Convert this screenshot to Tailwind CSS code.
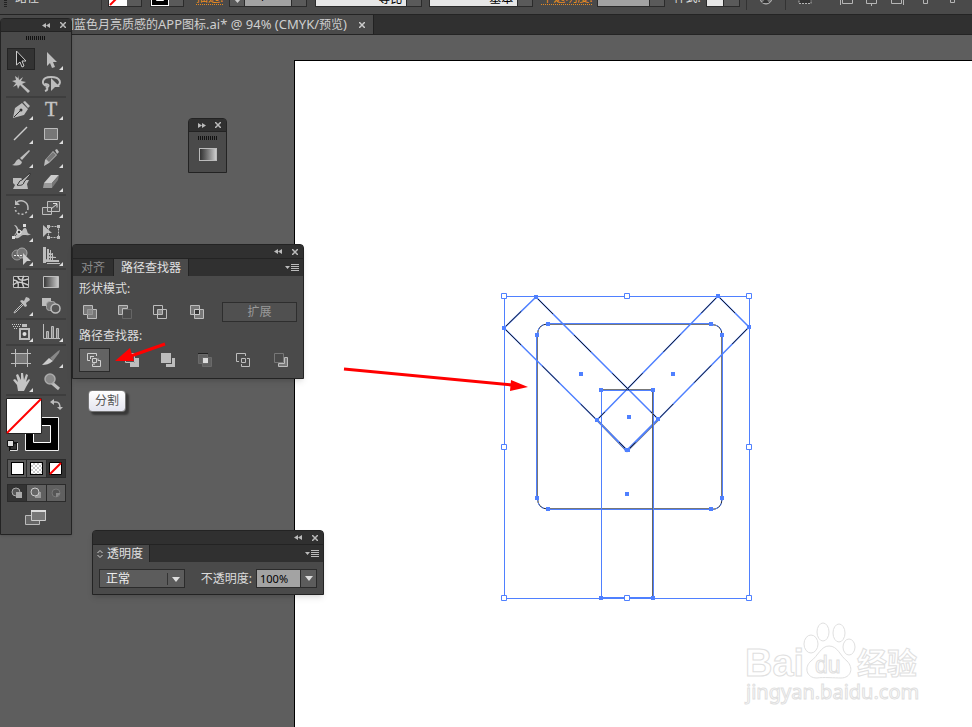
<!DOCTYPE html>
<html lang="zh-CN">
<head>
    <meta charset="UTF-8">
    <meta name="viewport" content="width=device-width, initial-scale=1.0">
    <title>蓝色月亮质感的APP图标.ai</title>
    <script src="https://cdn.jsdelivr.net/npm/@tailwindcss/browser@4"></script>
</head>
<body class="relative flex h-screen flex-col overflow-hidden bg-[#5e5e5e] font-['Noto_Sans','Noto_Sans_CJK_SC',sans-serif] text-xs text-[#dcdcdc]">

    <!-- control bar, scrolled half out of the window -->
    <header class="flex h-[14px] shrink-0 flex-col justify-end overflow-hidden bg-[#4a4a4a]">
        <div class="flex h-7 shrink-0 items-start whitespace-nowrap leading-6">
            <div class="ml-1 mr-2 h-[21px] w-[3px] bg-[repeating-linear-gradient(#222_0_1px,#4a4a4a_1px_2px)]"></div>
            <span class="w-[86px]">路径</span>
            <div class="mr-[6px] h-6 w-px bg-[#333]"></div>
            <button class="mr-2 flex h-[21px] w-[34px] border border-[#2b2b2b] bg-[#5a5a5a]" aria-label="填色">
                <svg class="h-[19px] w-[18px]" viewBox="0 0 18 19"><rect width="18" height="19" fill="#fff"/><path d="M1 18 17 2" stroke="#f00" stroke-width="2"/></svg>
            </button>
            <button class="mr-3 flex h-[21px] w-[34px] border border-[#2b2b2b] bg-[#5a5a5a]" aria-label="描边颜色">
                <svg class="h-[19px] w-[18px]" viewBox="0 0 18 19"><rect width="18" height="19" fill="#fff"/><path d="M1 1h16v17H1z"/><path d="M5.500 5.500h7v8h-7z" fill="#4a4a4a" stroke="#fff"/></svg>
            </button>
            <a href="#" class="mr-[6px] h-[19px] border-b border-dotted border-[#e88a20] text-[#e88a20]">描边:</a>
            <button class="flex h-[21px] w-4 items-end justify-center border border-[#2b2b2b] bg-[#5a5a5a]" aria-label="粗细微调">
                <svg class="mb-[3px] h-[6px] w-[7px]" viewBox="0 0 7 6"><path d="M0 0h7v2L3.500 6 0 2z" fill="#ccc"/></svg>
            </button>
            <input class="h-[21px] w-[46px] border-y border-[#2b2b2b] bg-[#a3a3a3] pr-3 text-center text-black" value="1" aria-label="描边粗细">
            <button class="mr-2 h-[21px] w-4 border border-[#2b2b2b] bg-[#5a5a5a]" aria-label="粗细菜单"></button>
            <button class="flex h-[21px] w-[107px] border border-[#2b2b2b] bg-[#5a5a5a] text-black"><span class="h-[19px] w-[91px] border-r border-[#2b2b2b] bg-[#e6e6e6] pr-1 text-right">等比</span></button>
            <button class="ml-[7px] mr-2 flex h-[21px] w-[104px] border border-[#2b2b2b] bg-[#5a5a5a] text-black"><span class="h-[19px] w-[88px] border-r border-[#2b2b2b] bg-[#e6e6e6] pr-1 text-right">基本</span></button>
            <a href="#" class="mr-[5px] h-[19px] border-b border-dotted border-[#e88a20] text-[#e88a20]">不透明度:</a>
            <button class="mr-2 flex h-[21px] w-[68px] border border-[#2b2b2b] bg-[#5a5a5a]" aria-label="不透明度"><span class="h-[19px] w-[52px] border-r border-[#2b2b2b] bg-[#a3a3a3]"></span></button>
            <span class="w-[33px]">样式:</span>
            <button class="mr-[6px] flex h-[21px] w-[34px] border border-[#2b2b2b] bg-[#5a5a5a]" aria-label="图形样式"><span class="h-[19px] w-[17px] border-r border-[#2b2b2b] bg-[#e6e6e6]"></span></button>
            <div class="h-6 w-px bg-[#333]"></div>
            <svg class="ml-3 h-[21px] w-[14px]" viewBox="0 0 14 21"><circle cx="7" cy="12" r="6" fill="#777" stroke="#bbb"/><path d="M7 12 3 17l7 0z" fill="#333"/></svg>
            <div class="ml-3 h-6 w-px bg-[#333]"></div>
            <svg class="ml-3 h-[21px] w-[170px]" viewBox="0 0 170 21" fill="none" stroke="#b5b5b5">
                <path d="M1 9.500h12v8H1z" fill="#333" stroke-dasharray="2 1"/>
                <path d="M42.500 5v14M44.500 9v8.500h10V9M68.500 9v8.500h10V9M73.500 17v3M93.500 9v8.500h10V9M105.500 5v14M125.500 9v8.500h4V9M152.500 9v7.500h4V9"/>
            </svg>
        </div>
    </header>

    <!-- document tabs -->
    <nav class="flex h-[21px] shrink-0 border-b border-t border-[#242424] bg-[#303030]">
        <div class="flex w-[374px] items-center border-r border-[#222] bg-[#4a4a4a] pl-[62px] text-[#cfcfcf]">
            <span class="flex-1 whitespace-nowrap">制蓝色月亮质感的<span class="text-[13px]">APP</span>图标<span class="text-[13px]">.ai* @ 94% (CMYK/</span>预览<span class="text-[13px]">)</span></span>
            <button class="mr-2" aria-label="关闭文档"><svg class="h-[6px] w-[6px]" viewBox="0 0 6 6"><path d="M0 0 6 6M6 0 0 6" stroke="#ccc" stroke-width="1.500"/></svg></button>
        </div>
    </nav>

    <!-- pasteboard and artboard -->
    <main class="flex min-h-0 flex-1 overflow-hidden pl-[294px] pt-[25px]">
        <div class="min-w-0 flex-1 overflow-hidden border-l border-t border-black bg-white">
            <svg class="h-[666px] w-[677px] max-w-none" viewBox="295 61 677 666" fill="none">
                <g stroke="#777" stroke-width="2">
                    <path d="M548 324h163M548 509h163M653 390v208M601 390h52M537 334v164M722 334v164"/>
                    <path d="m597 420 30 31 31-31"/>
                </g>
                <g stroke="#222" stroke-width="1">
                    <path d="M537.500 335q0-11 11-11M711 324.500q11 0 11 11M537.500 498q0 11 11 11M711 509.500q11 0 11-11"/>
                </g>
                <g stroke="#4f80ff" stroke-width="1">
                    <path d="M504.500 296.500h245v302h-245z"/>
                    <path d="M601.500 390.500h52v207h-52z"/>
                    <path d="M548 323.500h163M548 509.500h163M536.500 335v163M722.500 335v163M601 597.500h52"/>
                    <path stroke-width="1.500" d="m536 297 122 122-31 31-123-122zM718 296l31 31-122 124-30-31z"/>
                    <path stroke-dasharray="3 2" d="M537.500 335q0-11 11-11M711 324.500q11 0 11 11M537.500 498q0 11 11 11M711 509.500q11 0 11-11"/>
                </g>
                <!-- black path shows through the selection edge in places -->
                <path stroke="#222" stroke-dasharray="24 30" d="m536 297 122 122M504 328l123 122M718 296l31 31M718 296 597 420M749 327 627 451M504 328l32-31"/>
                <path stroke="#666" d="M652.500 391v206"/>
                <path fill="#4f80ff" d="M534 295h4v4h-4zM502 326h4v4h-4zM716 294h4v4h-4zM747 325h4v4h-4zM546 322h4v4h-4zM709 322h4v4h-4zM535 333h4v4h-4zM720 333h4v4h-4zM535 496h4v4h-4zM720 496h4v4h-4zM546 507h4v4h-4zM709 507h4v4h-4zM579 372h4v4h-4zM671 372h4v4h-4zM599 388h4v4h-4zM651 388h4v4h-4zM627 415h4v4h-4zM595 418h4v4h-4zM656 417h4v4h-4zM624 448h6v4h-5zM625 492h4v4h-4zM599 596h4v4h-4zM651 596h4v4h-4z"/>
                <path fill="#fff" stroke="#4f80ff" d="M501.500 293.500h5v5h-5zM624.500 293.500h5v5h-5zM746.500 293.500h5v5h-5zM501.500 444.500h5v5h-5zM746.500 444.500h5v5h-5zM501.500 595.500h5v5h-5zM624.500 595.500h5v5h-5zM746.500 595.500h5v5h-5z"/>

                <path d="m344 369 168 16" stroke="#f00" stroke-width="3"/>
                <path d="m511 380 17 7-18 4z" fill="#f00"/>

                <!-- watermark -->
                <g fill="#fff" stroke="#e0e0e0" stroke-width="1">
                    <text x="745" y="676" font-family="Liberation Sans, sans-serif" font-weight="700" font-size="38">Bai</text>
                    <ellipse cx="811" cy="644" rx="7" ry="9"/>
                    <ellipse cx="823" cy="632" rx="6" ry="9"/>
                    <ellipse cx="839" cy="633" rx="6" ry="9"/>
                    <ellipse cx="849" cy="647" rx="6" ry="8"/>
                    <path d="M829 646c9 0 11 10 18 15 7 7 4 17-6 17-6 0-18-1-24 0-11 0-13-11-6-17 7-5 10-15 18-15z"/>
                    <text x="815" y="673" font-family="Liberation Sans, sans-serif" font-size="23">du</text>
                    <text x="857" y="674" font-family="Noto Sans CJK SC, sans-serif" font-weight="700" font-size="30">经验</text>
                    <text x="746" y="699" font-family="Noto Sans, sans-serif" font-size="20">jingyan.baidu.com</text>
                </g>
            </svg>
        </div>
    </main>

    <!-- toolbox -->
    <aside class="absolute left-0 top-[18px] w-[72px] rounded-t border border-[#232323] bg-[#4a4a4a] shadow">
        <div class="flex h-[13px] items-center justify-end gap-[10px] border-b border-[#232323] bg-[#303030] pr-[5px]">
            <button aria-label="折叠"><svg class="h-[5px] w-2" viewBox="0 0 8 5"><path d="M4 0v5L0 2.500zM8 0v5L4 2.500z" fill="#bbb"/></svg></button>
            <button aria-label="关闭"><svg class="h-[6px] w-[6px]" viewBox="0 0 6 6"><path d="M0 0 6 6M6 0 0 6" stroke="#bbb" stroke-width="1.500"/></svg></button>
        </div>
        <div class="mx-auto mb-2 mt-1 h-1 w-5 bg-[repeating-linear-gradient(90deg,#111_0_1px,#4a4a4a_1px_2px)]"></div>

        <div class="px-[5px]">
            <div class="grid grid-cols-2 border-b-2 border-[#3e3e3e]">
                <button class="mx-auto flex h-[22px] w-7 items-center justify-center border border-[#242424] bg-[#333]" aria-label="选择工具">
                    <svg class="h-5 w-5 shrink-0" viewBox="0 0 20 20"><path d="M5.500 2v14l3.500-3 2 5 2-1-2-5h4z" fill="#222" stroke="#ccc"/></svg>
                </button>
                <button class="flex h-6 items-center justify-center" aria-label="直接选择工具">
                    <svg class="h-6 w-[26px]" viewBox="0 0 26 24"><path d="M9 4v14l3-3 2 5 3-1-2-5h4z" fill="#bdbdbd"/><path d="M25 18v4h-4z" fill="#ddd"/></svg>
                </button>
                <button class="flex h-6 items-center justify-center" aria-label="魔棒工具">
                    <svg class="h-6 w-[26px]" viewBox="0 0 26 24"><path d="m10 3 1 5 4-3-2 4 5 1-4 2 8 7-2 2-8-8-2 4-1-4-4 2 3-4-4-2 4-1-1-4 3 2z" fill="#bdbdbd"/></svg>
                </button>
                <button class="flex h-6 items-center justify-center" aria-label="套索工具">
                    <svg class="h-6 w-[26px]" viewBox="0 0 26 24"><path d="M9 14c-6-1-6-9 4-9 10 0 11 7 6 9M7 12c5 0 4 3 1 3 2 1 2 3-1 4" fill="none" stroke="#bdbdbd" stroke-width="2"/><path d="M13 6v13l4-4h5z" fill="#bdbdbd"/></svg>
                </button>
            </div>
            <div class="grid grid-cols-2 border-b-2 border-[#3e3e3e]">
                <button class="flex h-6 items-center justify-center" aria-label="钢笔工具">
                    <svg class="h-6 w-[26px]" viewBox="0 0 26 24"><path d="m15 4 2-1 5 5-2 2zM14 5l6 6-4 6-11 3 2-10z" fill="#bdbdbd"/><path d="m6 19 7-7" stroke="#333"/><circle cx="13" cy="12" r="1.500" fill="#333"/><path d="M25 18v4h-4z" fill="#ddd"/></svg>
                </button>
                <button class="flex h-6 items-center justify-center" aria-label="文字工具">
                    <svg class="h-6 w-[26px]" viewBox="0 0 26 24"><text x="7" y="18" font-family="Liberation Serif, serif" font-size="20" fill="#ccc" stroke="#bbb" stroke-width=".5">T</text><path d="M25 18v4h-4z" fill="#ddd"/></svg>
                </button>
                <button class="flex h-6 items-center justify-center" aria-label="直线段工具">
                    <svg class="h-6 w-[26px]" viewBox="0 0 26 24"><path d="M6 18 19 5" stroke="#ccc" stroke-width="1.500"/><path d="M25 18v4h-4z" fill="#ddd"/></svg>
                </button>
                <button class="flex h-6 items-center justify-center" aria-label="矩形工具">
                    <svg class="h-6 w-[26px]" viewBox="0 0 26 24"><path d="M6.500 6.500h13v11h-13z" fill="#777" stroke="#bbb"/><path d="M25 18v4h-4z" fill="#ddd"/></svg>
                </button>
                <button class="flex h-6 items-center justify-center" aria-label="画笔工具">
                    <svg class="h-6 w-[26px]" viewBox="0 0 26 24"><path d="m21 4 1 1-8 9-2-2zM11 13l3 3c-1 4-5 4-10 3 4-1 3-5 7-6z" fill="#bdbdbd"/><path d="M25 18v4h-4z" fill="#ddd"/></svg>
                </button>
                <button class="flex h-6 items-center justify-center" aria-label="铅笔工具">
                    <svg class="h-6 w-[26px]" viewBox="0 0 26 24"><path d="m17 4 2-1 2 3-2 2zM15 5l4 4-8 8-5 3 1-6z" fill="#bdbdbd"/><path d="m15 6 3 3-7 7-3-3z" fill="#777"/><path d="M25 18v4h-4z" fill="#ddd"/></svg>
                </button>
                <button class="flex h-6 items-center justify-center" aria-label="斑点画笔工具">
                    <svg class="h-6 w-[26px]" viewBox="0 0 26 24"><path d="M5 8h8l2 2h6l-2 4 1 5H5l2-4-2-2z" fill="#bdbdbd"/><path d="M22 3v2l-6 7c0 3-4 4-7 3 2-1 2-5 5-5z" fill="#bdbdbd" stroke="#333"/></svg>
                </button>
                <button class="flex h-6 items-center justify-center" aria-label="橡皮擦工具">
                    <svg class="h-6 w-[26px]" viewBox="0 0 26 24"><path d="M13 5h8l-7 8H6z" fill="#ccc"/><path d="M6 13h8v5H5z" fill="#999"/><path d="m21 5-1 5-6 8v-5z" fill="#777"/><path d="M25 18v4h-4z" fill="#ddd"/></svg>
                </button>
            </div>
            <div class="grid grid-cols-2 border-b-2 border-[#3e3e3e]">
                <button class="flex h-6 items-center justify-center" aria-label="旋转工具">
                    <svg class="h-6 w-[26px]" viewBox="0 0 26 24"><path d="M9 6c5-3 11 0 11 6" fill="none" stroke="#bdbdbd" stroke-width="1.500"/><path d="M20 12c0 8-13 9-13-1" fill="none" stroke="#bdbdbd" stroke-width="1.500" stroke-dasharray="2 2"/><path d="M7 4v5h5z" fill="#bdbdbd"/><path d="M25 18v4h-4z" fill="#ddd"/></svg>
                </button>
                <button class="flex h-6 items-center justify-center" aria-label="比例缩放工具">
                    <svg class="h-6 w-[26px]" viewBox="0 0 26 24"><path d="M9.500 5.500h12v10h-12zM4.500 11.500h9v7h-9z" fill="#555" stroke="#bdbdbd"/><path d="m13 13 6-5M15 7.500h4v4" fill="none" stroke="#ddd"/><path d="M25 18v4h-4z" fill="#ddd"/></svg>
                </button>
                <button class="flex h-6 items-center justify-center" aria-label="宽度工具">
                    <svg class="h-6 w-[26px]" viewBox="0 0 26 24"><path d="M6 5c5 0 3 6 7 6 3 0 1-3 4-3s1 7 6 6c-4 3-7-1-11 3-4 3-7 0-5-3 3-3 2-6-1-9z" fill="#bdbdbd"/><path d="M5 18 17 5" stroke="#444"/><circle cx="11" cy="12" r="2" fill="#333" stroke="#fff"/><path d="M4 16h3v3H4zM15 4h3v3h-3z" fill="#ddd"/><path d="M25 18v4h-4z" fill="#ddd"/></svg>
                </button>
                <button class="flex h-6 items-center justify-center" aria-label="自由变换工具">
                    <svg class="h-6 w-[26px]" viewBox="0 0 26 24"><path d="M10.500 6.500h10v11h-10z" fill="none" stroke="#bdbdbd" stroke-dasharray="2 1"/><path d="M9 5h3v3H9zM19 5h3v3h-3zM19 16h3v3h-3zM9 16h3v3H9zM5 5v12l4-4h5z" fill="#bdbdbd"/></svg>
                </button>
                <button class="flex h-6 items-center justify-center" aria-label="形状生成器工具">
                    <svg class="h-6 w-[26px]" viewBox="0 0 26 24"><circle cx="9" cy="11" r="5" fill="#666" stroke="#999"/><circle cx="14" cy="9" r="5" fill="#777" stroke="#aaa"/><path d="M6 11.500h10" stroke="#eee" stroke-dasharray="2 1"/><path d="M15 9v12l4-4h4z" fill="#ccc"/><path d="M25 18v4h-4z" fill="#ddd"/></svg>
                </button>
                <button class="flex h-6 items-center justify-center" aria-label="透视网格工具">
                    <svg class="h-6 w-[26px]" viewBox="0 0 26 24"><path d="M5 3h3v16H5zM9 5h2v12H9zM12 6h1v10h-1zM14 9h1v7h-1zM5 15l16 1v2H5zM9 19h13v1H9zM9 12l9 1v1H9zM9 8l6 2v1H9z" fill="#bdbdbd"/><path d="M25 18v4h-4z" fill="#ddd"/></svg>
                </button>
            </div>
            <div class="grid grid-cols-2 border-b-2 border-[#3e3e3e]">
                <button class="flex h-6 items-center justify-center" aria-label="网格工具">
                    <svg class="h-6 w-[26px]" viewBox="0 0 26 24"><path d="M5.500 6.500h15v11h-15z" fill="#333" stroke="#bdbdbd"/><path d="M5 10c5 0 6 3 5 8M10 6c0 5 5 5 10 3M5 15c5-4 9-3 15 0M16 6c-3 4-2 7 0 12" fill="none" stroke="#ccc" stroke-width="1.500"/></svg>
                </button>
                <button class="flex h-6 items-center justify-center" aria-label="渐变工具">
                    <svg class="h-6 w-[26px]" viewBox="0 0 26 24"><defs><linearGradient id="grad"><stop stop-color="#333"/><stop offset="1" stop-color="#ccc"/></linearGradient></defs><path d="M5.500 6.500h15v11h-15z" fill="url(#grad)" stroke="#bdbdbd"/></svg>
                </button>
                <button class="flex h-6 items-center justify-center" aria-label="吸管工具">
                    <svg class="h-6 w-[26px]" viewBox="0 0 26 24"><path d="m15 9-8 8-1 2 2-1 8-8" fill="#444" stroke="#bdbdbd"/><path d="m12 7 2-1 2 1 2-4 3 1 1 2-4 3 1 3-2 1z" fill="#bdbdbd"/><path d="M25 18v4h-4z" fill="#ddd"/></svg>
                </button>
                <button class="flex h-6 items-center justify-center" aria-label="混合工具">
                    <svg class="h-6 w-[26px]" viewBox="0 0 26 24"><path d="M4 4h9v8H4z" fill="#bdbdbd"/><rect x="8.500" y="7.500" width="9" height="9" rx="3" fill="#777" stroke="#aaa"/><circle cx="17.500" cy="14.500" r="4.500" fill="#555" stroke="#bdbdbd" stroke-width="1.500"/></svg>
                </button>
            </div>
            <div class="grid grid-cols-2 border-b-2 border-[#3e3e3e]">
                <button class="flex h-6 items-center justify-center" aria-label="符号喷枪工具">
                    <svg class="h-6 w-[26px]" viewBox="0 0 26 24"><path d="M4 4.500h9M5 6.500h8M6 8.500h4" stroke="#ccc" stroke-dasharray="1 1"/><path d="M14 4h5v3h-5z" fill="#bdbdbd"/><path d="M12 9h9v10h-9z" fill="#444" stroke="#bdbdbd" stroke-width="2"/><circle cx="16.500" cy="14" r="2" fill="#ddd"/><path d="M25 18v4h-4z" fill="#ddd"/></svg>
                </button>
                <button class="flex h-6 items-center justify-center" aria-label="柱形图工具">
                    <svg class="h-6 w-[26px]" viewBox="0 0 26 24"><path d="M5.500 4v14.500H22" fill="none" stroke="#bdbdbd"/><path d="M8.500 11.500h2v7h-2zM13.500 6.500h2v12h-2zM18.500 8.500h2v10h-2z" fill="#888" stroke="#bbb"/><path d="M25 18v4h-4z" fill="#ddd"/></svg>
                </button>
            </div>
            <div class="grid grid-cols-2 border-b-2 border-[#3e3e3e]">
                <button class="flex h-6 items-center justify-center" aria-label="画板工具">
                    <svg class="h-6 w-[26px]" viewBox="0 0 26 24"><path d="M7.500 7.500h12v10h-12z" fill="#777"/><path d="M7.500 3v18M19.500 3v18M3 7.500h20M3 17.500h20" stroke="#bdbdbd"/></svg>
                </button>
                <button class="flex h-6 items-center justify-center" aria-label="切片工具">
                    <svg class="h-6 w-[26px]" viewBox="0 0 26 24"><path d="m12 12 8-7 2-1-1 3-6 8z" fill="#888"/><path d="m11 12 4 3c-4 3-7 4-11 4z" fill="#ccc"/><path d="M25 18v4h-4z" fill="#ddd"/></svg>
                </button>
                <button class="flex h-6 items-center justify-center" aria-label="抓手工具">
                    <svg class="h-6 w-[26px]" viewBox="0 0 26 24"><path d="m9 15-4-5 2-1 3 3-2-7 2-1 3 6V3h2l1 7 2-6 2 1-2 7 3-3 1 1-4 7-2 4h-6z" fill="#c4c4c4"/><path d="M25 18v4h-4z" fill="#ddd"/></svg>
                </button>
                <button class="flex h-6 items-center justify-center" aria-label="缩放工具">
                    <svg class="h-6 w-[26px]" viewBox="0 0 26 24"><path d="m14 13 7 6" stroke="#bdbdbd" stroke-width="3"/><circle cx="12" cy="9" r="5" fill="#888" stroke="#aaa" stroke-width="1.500"/></svg>
                </button>
            </div>

            <button class="block" aria-label="填色和描边">
                <svg class="h-[58px] w-[60px]" viewBox="0 0 60 58">
                    <path d="M19.500 21.500h33v33h-33z" fill="#000" stroke="#eee"/>
                    <path d="M27.500 29.500h17v17h-17z" fill="#4a4a4a" stroke="#fff"/>
                    <path d="M.5 2.500h35v35H.5z" fill="#fff" stroke="#222"/>
                    <path d="M1 37 35 3" stroke="#f00" stroke-width="2"/>
                    <path d="M47 6h3q4 0 4 6" fill="none" stroke="#bdbdbd" stroke-width="1.500"/><path d="M48 3v6l-4-3zM51 11h6l-3 3z" fill="#bdbdbd"/>
                    <path d="M4 47h7v7H4z" fill="#333" stroke="#111" stroke-width="2"/><path d="M1.500 44.500h6v6h-6z" fill="#ddd" stroke="#111"/><path d="M11.500 47v7.500H4" fill="none" stroke="#ddd"/>
                </svg>
            </button>
            <div class="ml-px mt-[5px] flex h-[19px] border border-[#2b2b2b] bg-[#5a5a5a]">
                <button class="flex flex-1 items-center justify-center border-r border-[#2b2b2b]" aria-label="颜色"><span class="h-[13px] w-[13px] border border-black bg-white"></span></button>
                <button class="flex flex-1 items-center justify-center border-r border-[#2b2b2b]" aria-label="渐变"><span class="h-[13px] w-[13px] border border-black bg-[conic-gradient(#ccc_25%,#fff_0_50%,#ccc_0_75%,#fff_0)] bg-[length:4px_4px]"></span></button>
                <button class="flex flex-1 items-center justify-center bg-[#333]" aria-label="无"><svg class="h-[13px] w-[13px]" viewBox="0 0 13 13"><path d="M.5.5h12v12H.5z" fill="#fff" stroke="#000"/><path d="M1 12 12 1" stroke="#f00" stroke-width="2"/></svg></button>
            </div>
            <div class="ml-px mt-[6px] flex h-[18px] border border-[#2b2b2b] bg-[#606060]">
                <button class="flex flex-1 items-center justify-center border-r border-[#2b2b2b] bg-[#333]" aria-label="正常绘图"><svg class="h-3 w-3" viewBox="0 0 12 12"><circle cx="5" cy="5" r="4" fill="#555" stroke="#aaa"/><path d="M5 5h6v6H5z" fill="#aaa"/></svg></button>
                <button class="flex flex-1 items-center justify-center border-r border-[#2b2b2b]" aria-label="背面绘图"><svg class="h-3 w-3" viewBox="0 0 12 12"><path d="M5 5h6v6H5z" fill="#999"/><circle cx="5" cy="5" r="4" fill="#666" stroke="#ccc"/></svg></button>
                <button class="flex flex-1 items-center justify-center" aria-label="内部绘图" disabled><svg class="h-3 w-3" viewBox="0 0 12 12"><circle cx="6" cy="6" r="4" fill="#555" stroke="#777"/><path d="M6 6h4v1L7 10H6z" fill="#888"/></svg></button>
            </div>
            <button class="mx-auto mb-[7px] mt-[7px] block w-[22px]" aria-label="更改屏幕模式">
                <svg class="h-[18px] w-[22px]" viewBox="0 0 22 18"><path d="M.5 6.500h14v9H.5z" fill="#666" stroke="#bbb"/><path d="M6.500 1.500h14v10h-14z" fill="#777" stroke="#ccc"/><path d="M6 2h15" stroke="#ddd" stroke-width="2"/></svg>
            </button>
        </div>
    </aside>

    <!-- collapsed gradient panel -->
    <section class="absolute left-[188px] top-[118px] h-[55px] w-[39px] rounded-t border border-[#232323] bg-[#4a4a4a]">
        <div class="flex h-[13px] items-center justify-end gap-[9px] border-b border-[#232323] bg-[#303030] pr-[5px]">
            <button aria-label="展开"><svg class="h-[5px] w-2" viewBox="0 0 8 5"><path d="M0 0v5l4-2.500zM4 0v5l4-2.500z" fill="#bbb"/></svg></button>
            <button aria-label="关闭"><svg class="h-[6px] w-[6px]" viewBox="0 0 6 6"><path d="M0 0 6 6M6 0 0 6" stroke="#bbb" stroke-width="1.500"/></svg></button>
        </div>
        <div class="mx-auto mt-1 h-1 w-5 bg-[repeating-linear-gradient(90deg,#111_0_1px,#4a4a4a_1px_2px)]"></div>
        <button class="mx-auto mt-2 block h-[13px] w-[18px] border border-[#bbb] bg-linear-to-r from-[#333] to-[#ccc]" aria-label="渐变面板"></button>
    </section>

    <!-- pathfinder panel -->
    <section class="absolute left-[72px] top-[244px] h-[135px] w-[232px] rounded-t border border-[#232323] bg-[#4a4a4a] shadow-md">
        <div class="flex h-[13px] items-center justify-end gap-[10px] bg-[#303030] pr-[5px]">
            <button aria-label="折叠"><svg class="h-[5px] w-2" viewBox="0 0 8 5"><path d="M4 0v5L0 2.500zM8 0v5L4 2.500z" fill="#bbb"/></svg></button>
            <button aria-label="关闭"><svg class="h-[6px] w-[6px]" viewBox="0 0 6 6"><path d="M0 0 6 6M6 0 0 6" stroke="#bbb" stroke-width="1.500"/></svg></button>
        </div>
        <div class="flex h-[18px] border-t border-[#232323] bg-[#303030] leading-[18px]">
            <button class="w-[41px] border-r border-[#232323] text-[#8a8a8a]">对齐</button>
            <button class="w-[75px] border-r border-[#232323] bg-[#4a4a4a] text-[#e0e0e0]">路径查找器</button>
            <button class="ml-auto mr-1" aria-label="面板菜单"><svg class="h-2 w-[14px]" viewBox="0 0 14 8"><path d="M0 2h5L2.500 5zM6 0h8v1H6zM6 2h8v1H6zM6 4h8v1H6zM6 6h8v1H6z" fill="#bbb"/></svg></button>
        </div>
        <div class="px-[6px] pt-1">
            <h2 class="leading-[18px]">形状模式:</h2>
            <div class="mt-1 flex h-5 items-center">
                <button class="ml-1 mr-5" aria-label="联集"><svg class="h-[15px] w-[15px]" viewBox="0 0 15 15"><path d="M.5.5h9v4h4v9h-9v-4h-4z" fill="#777" stroke="#bdbdbd"/><path d="M4.500 4.500h5v5h-5z" fill="#888" stroke="#999"/></svg></button>
                <button class="mr-5" aria-label="减去顶层"><svg class="h-[15px] w-[15px]" viewBox="0 0 15 15" fill="none"><path d="M4.500 4.500h9v9h-9z" stroke="#666"/><path d="M.5.500h9v3h-5v6h-4z" fill="#777" stroke="#bdbdbd"/></svg></button>
                <button class="mr-[22px]" aria-label="交集"><svg class="h-[15px] w-[15px]" viewBox="0 0 15 15" fill="none" stroke="#bdbdbd"><path d="M.5.5h9v9h-9zM4.500 4.500h9v9h-9z"/><path d="M5 5h4v4H5z" fill="#888" stroke="none"/></svg></button>
                <button aria-label="差集"><svg class="h-[15px] w-[15px]" viewBox="0 0 15 15"><path d="M.5.5h9v9h-9zM4.500 4.500h9v9h-9z" fill="#777" stroke="#bdbdbd"/><path d="M4.500 4.500h5v5h-5z" fill="#333" stroke="#ccc"/></svg></button>
                <button class="ml-auto h-5 w-[75px] border border-[#2e2e2e] bg-[#505050] text-[#999]" disabled>扩展</button>
            </div>
            <h2 class="mt-[5px] leading-[18px]">路径查找器:</h2>
            <div class="mt-[3px] flex h-6 items-center">
                <button class="mr-[15px] flex h-6 w-[31px] items-center justify-center border border-[#2b2b2b] bg-[#636363]" aria-label="分割"><svg class="h-[15px] w-[15px]" viewBox="0 0 15 15" fill="none" stroke="#d0d0d0"><path d="M9.500 3V.5h-9v7H3M3 3.500h4M3.500 3v3M5.500 5.500h4v4h-4zM11 5.500v2h2.500v6h-8V11H8"/></svg></button>
                <button class="mr-[21px]" aria-label="修边"><svg class="h-[15px] w-[15px]" viewBox="0 0 15 15"><path d="M.5.500h9v9h-9z" fill="#555" stroke="#bdbdbd"/><path d="M5 10h5V5h4v9H5z" fill="#bdbdbd"/></svg></button>
                <button class="mr-[22px]" aria-label="合并"><svg class="h-[15px] w-[15px]" viewBox="0 0 15 15"><path d="M0 0h10v10H0zM5 11h6V5h3v9H5z" fill="#bdbdbd"/></svg></button>
                <button class="mr-[23px]" aria-label="裁剪"><svg class="h-[15px] w-[15px]" viewBox="0 0 15 15"><path d="M.5 1.500h9v9h-9zM4.500 4.500h9v9h-9z" fill="#606060" stroke="#6a6a6a"/><path d="M5 5h5v5H5z" fill="#ddd"/><path d="M0 0h10v1H0z" fill="#222"/></svg></button>
                <button class="mr-[23px]" aria-label="轮廓"><svg class="h-[15px] w-[15px]" viewBox="0 0 15 15" fill="none" stroke="#bdbdbd"><path d="M9.500 3V.5h-9v8H3M5.500 5.500h4v4h-4zM11 5.500h2.500v8h-8V11"/></svg></button>
                <button aria-label="减去后方对象"><svg class="h-[15px] w-[15px]" viewBox="0 0 15 15" fill="none"><path d="M.5.500h9v9h-9z" stroke="#777"/><path d="M10.500 4.500h3v9h-9v-3h6z" fill="#777" stroke="#bdbdbd"/></svg></button>
            </div>
        </div>
    </section>

    <!-- pointer to the divide button -->
    <svg class="absolute left-[114px] top-[340px] h-[26px] w-[54px]" viewBox="114 340 54 26"><path d="m165 344-34 12" stroke="#f00" stroke-width="3"/><path d="m115 361 15-13 4 13z" fill="#f00"/></svg>

    <div role="tooltip" class="absolute left-[88px] top-[390px] rounded-sm border border-[#777] bg-linear-to-b from-white to-[#e4e5f0] px-[6px] leading-5 text-[#555] shadow-[3px_3px_2px_#00000066]">分割</div>

    <!-- transparency panel -->
    <section class="absolute left-[92px] top-[530px] h-[65px] w-[232px] rounded-t border border-[#232323] bg-[#4a4a4a] shadow-md">
        <div class="flex h-[13px] items-center justify-end gap-[10px] bg-[#303030] pr-[5px]">
            <button aria-label="折叠"><svg class="h-[5px] w-2" viewBox="0 0 8 5"><path d="M4 0v5L0 2.500zM8 0v5L4 2.500z" fill="#bbb"/></svg></button>
            <button aria-label="关闭"><svg class="h-[6px] w-[6px]" viewBox="0 0 6 6"><path d="M0 0 6 6M6 0 0 6" stroke="#bbb" stroke-width="1.500"/></svg></button>
        </div>
        <div class="flex h-[18px] border-t border-[#232323] bg-[#303030] leading-[18px]">
            <button class="flex w-[57px] items-center gap-1 border-r border-[#232323] bg-[#4a4a4a] pl-1 text-[#e0e0e0]"><svg class="h-2 w-[6px]" viewBox="0 0 6 8" fill="none" stroke="#ccc"><path d="M.5 3 3 .5 5.500 3M.5 5 3 7.500 5.500 5"/></svg>透明度</button>
            <button class="ml-auto mr-1" aria-label="面板菜单"><svg class="h-2 w-[14px]" viewBox="0 0 14 8"><path d="M0 2h5L2.500 5zM6 0h8v1H6zM6 2h8v1H6zM6 4h8v1H6zM6 6h8v1H6z" fill="#bbb"/></svg></button>
        </div>
        <form class="flex items-center px-[6px] pt-[7px]">
            <div class="grid w-[86px] items-center">
                <select class="col-start-1 row-start-1 h-[19px] w-full appearance-none border border-[#2b2b2b] bg-[#5c5c5c] pl-[6px] text-xs leading-4 text-[#eee]" aria-label="混合模式">
                    <option>正常</option>
                </select>
                <svg class="pointer-events-none col-start-1 row-start-1 h-3 w-[18px] justify-self-end" viewBox="0 0 18 12"><path d="M.5 0v12" stroke="#333"/><path d="M5 4h8l-4 5z" fill="#ddd"/></svg>
            </div>
            <label class="ml-4 mr-1 whitespace-nowrap leading-[18px]" for="opacity">不透明度:</label>
            <input class="ml-auto h-[19px] w-[45px] border border-[#2b2b2b] bg-[#a3a3a3] pl-[3px] text-[11px] leading-4 text-black" id="opacity" type="text" value="100%">
            <button class="flex h-[19px] w-4 items-center justify-center border border-l-0 border-[#2b2b2b] bg-[#5c5c5c]" type="button" aria-label="不透明度滑块"><svg class="h-[5px] w-2" viewBox="0 0 8 5"><path d="M0 0h8L4 5z" fill="#ddd"/></svg></button>
        </form>
    </section>
</body>
</html>
